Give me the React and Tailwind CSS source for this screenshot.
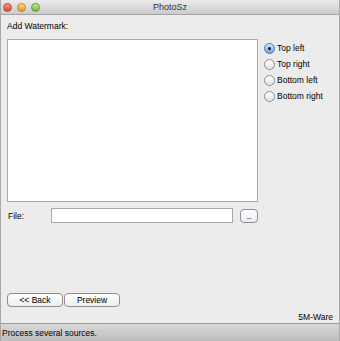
const font = { fontFamily: '"Liberation Sans", Arial, sans-serif' };

function Light({ className }) {
  return <span className={`block w-[9px] h-[9px] rounded-full border ${className}`} />;
}

function Radio({ label, checked }) {
  return (
    <div className="flex items-center h-[16px]">
      {checked ? (
        <span className="w-[11px] h-[11px] rounded-full border border-[#4f77ad] bg-linear-to-b from-[#d6e8fc] to-[#6ea3e0] flex items-center justify-center">
          <span className="w-[3px] h-[3px] rounded-full bg-[#111]" />
        </span>
      ) : (
        <span className="w-[11px] h-[11px] rounded-full border border-[#8c8c8c] bg-linear-to-b from-white to-[#e2e2e2]" />
      )}
      <span className="ml-[2px] text-[8.5px] leading-[10px] text-black">{label}</span>
    </div>
  );
}

function Button({ children, className = '' }) {
  return (
    <button className={`h-[14px] rounded-[4px] border border-[#8f8f8f] bg-linear-to-b from-white to-[#ededed] text-[8.5px] leading-[12px] text-black ${className}`}>
      {children}
    </button>
  );
}

export default function App() {
  return (
    <div style={font} className="w-[340px] h-[341px] flex flex-col bg-[#ececec] border-x border-[#a9a9a9] overflow-hidden">
      <div className="h-[15px] shrink-0 relative flex items-center bg-linear-to-b from-[#ececec] to-[#cbcbcb] border-b border-[#a3a3a3]">
        <div className="flex gap-[5px] pl-[2px]">
          <Light className="border-[#b8423c] bg-linear-to-b from-[#f79a93] to-[#d9423a]" />
          <Light className="border-[#b98229] bg-linear-to-b from-[#fbd68d] to-[#e09b25]" />
          <Light className="border-[#5e9a34] bg-linear-to-b from-[#c7ea9d] to-[#6cb43c]" />
        </div>
        <span className="absolute left-0 right-0 text-center text-[9px] leading-[14px] text-[#333]">PhotoSz</span>
      </div>

      <div className="flex-1 flex flex-col pl-[6px] pr-[6px]">
        <div className="mt-[6px] text-[8.5px] leading-[10px] text-black">Add Watermark:</div>
        <div className="mt-[8px] flex">
          <div className="w-[251px] h-[163px] bg-white border border-[#a9a9a9]" />
          <div className="ml-[6px] mt-[1px] flex flex-col">
            <Radio label="Top left" checked />
            <Radio label="Top right" />
            <Radio label="Bottom left" />
            <Radio label="Bottom right" />
          </div>
        </div>
        <div className="mt-[6px] flex items-center h-[15px]">
          <span className="pl-[1px] w-[44px] text-[8.5px] leading-[10px] text-black">File:</span>
          <div className="w-[182px] h-[15px] bg-white border border-[#a9a9a9]" />
          <Button className="ml-[7px] w-[18px] h-[13px] leading-[8px]">..</Button>
        </div>
        <div className="flex-1" />
        <div className="flex items-end justify-between">
          <div className="flex gap-[1px] mb-[16px]">
            <Button className="w-[56px]">&lt;&lt; Back</Button>
            <Button className="w-[56px]">Preview</Button>
          </div>
          <span className="mb-[1px] text-[8.5px] leading-[10px] text-black">5M-Ware</span>
        </div>
      </div>

      <div className="h-[18px] shrink-0 flex items-center border-t border-[#999] bg-linear-to-b from-[#d9d9d9] to-[#bdbdbd] pl-[1px]">
        <span className="text-[8.5px] leading-[10px] text-black">Process several sources.</span>
      </div>
    </div>
  );
}
